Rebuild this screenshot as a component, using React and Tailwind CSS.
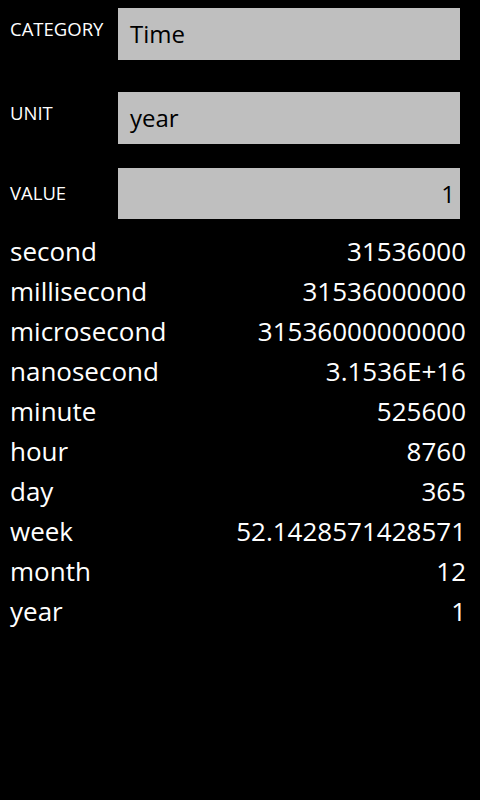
import React from "react";

const rows = [
  ["second", "31536000"],
  ["millisecond", "31536000000"],
  ["microsecond", "31536000000000"],
  ["nanosecond", "3.1536E+16"],
  ["minute", "525600"],
  ["hour", "8760"],
  ["day", "365"],
  ["week", "52.1428571428571"],
  ["month", "12"],
  ["year", "1"],
];

const App = () => {
  return (
    <div
      className="w-[480px] h-[800px] bg-black text-white overflow-hidden"
      style={{ fontFamily: '"Open Sans", "Noto Sans", sans-serif' }}
    >
      <div className="pl-[10px] pr-[20px] pt-[8px] flex flex-col">
        <div className="flex items-start">
          <p className="w-[108px] pt-[10px] text-[18.5px] leading-[22px]">CATEGORY</p>
          <div className="flex-1 h-[52px] bg-[#bfbfbf] text-black text-[24px] px-[12px] flex items-center">
            Time
          </div>
        </div>
        <div className="flex items-start mt-[32px]">
          <p className="w-[108px] pt-[10px] text-[18.5px] leading-[22px]">UNIT</p>
          <div className="flex-1 h-[52px] bg-[#bfbfbf] text-black text-[24px] px-[12px] flex items-center">
            year
          </div>
        </div>
        <div className="flex items-start mt-[24px]">
          <p className="w-[108px] pt-[14px] text-[18.5px] leading-[22px]">VALUE</p>
          <div className="flex-1 h-[51px] bg-[#bfbfbf] text-black text-[24px] pl-[8px] pr-[5px] flex items-center justify-end">
            1
          </div>
        </div>
      </div>
      <div className="pl-[10px] pr-[14px] pt-[12px] flex flex-col">
        {rows.map((item, key) => (
          <div
            key={key}
            className="h-[40px] flex items-center justify-between text-[26px] leading-[40px]"
          >
            <span>{item[0]}</span>
            <span>{item[1]}</span>
          </div>
        ))}
      </div>
    </div>
  );
};

export default App;
